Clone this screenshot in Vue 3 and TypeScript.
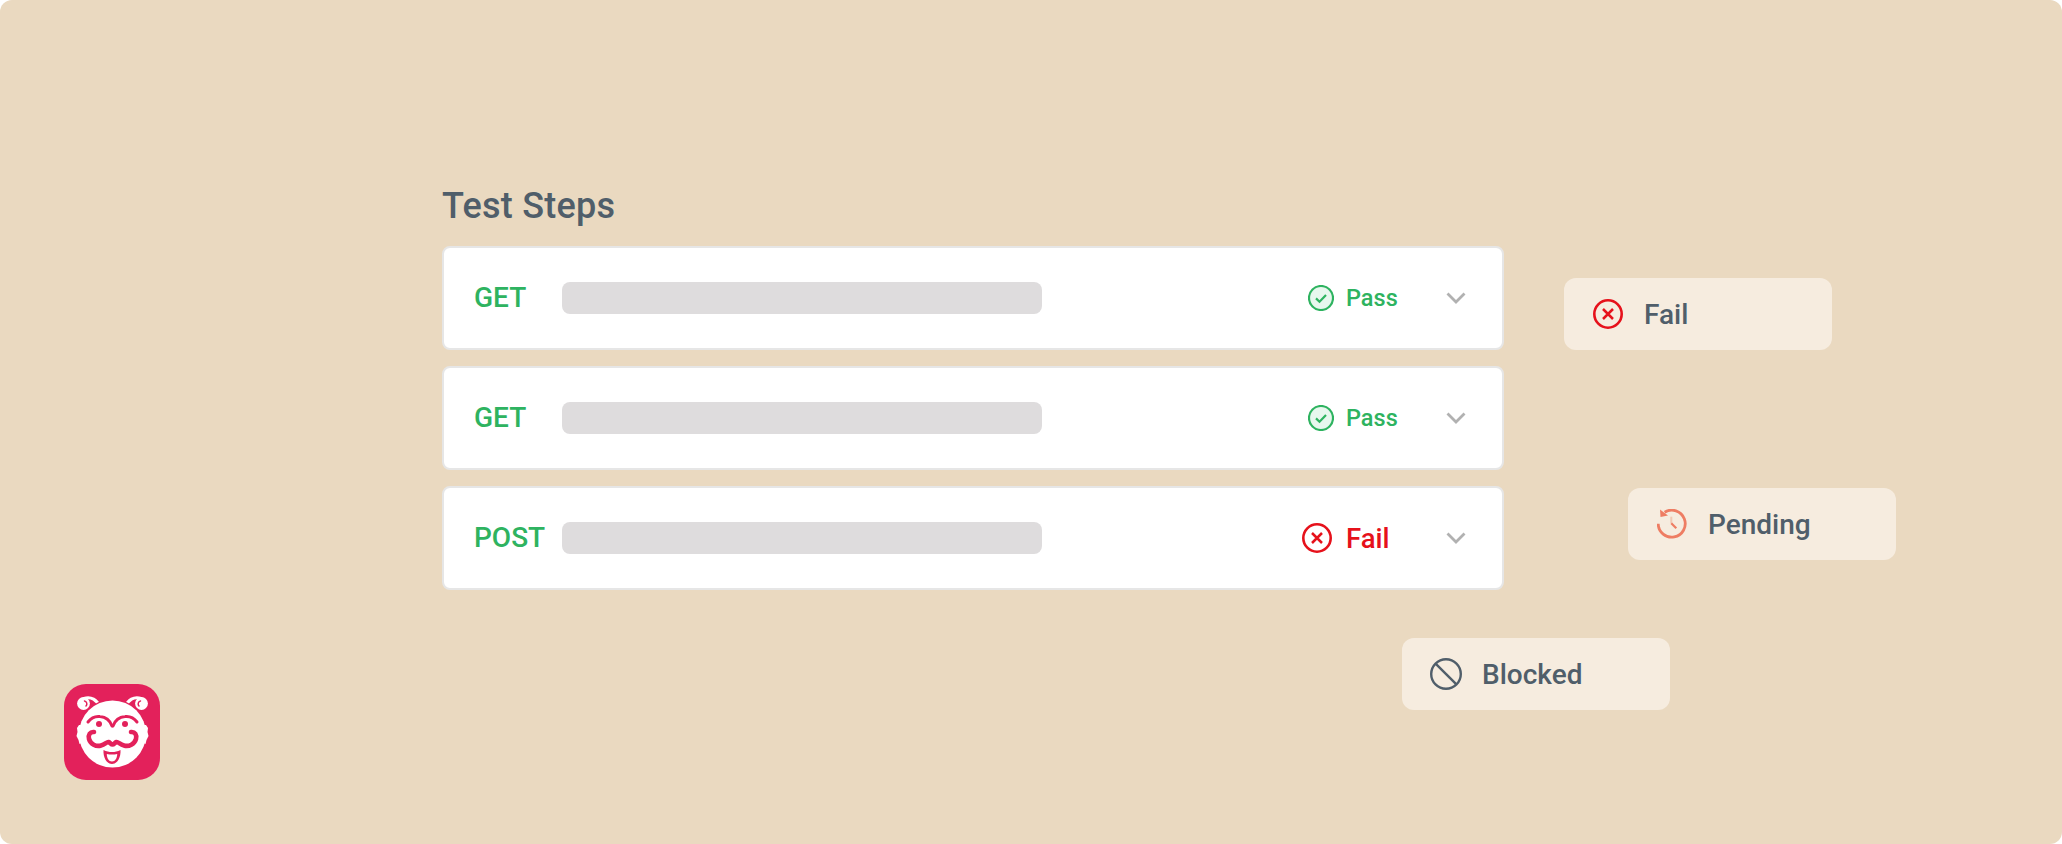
<script setup lang="ts">
interface Step {
  method: string
  status: 'pass' | 'fail'
  label: string
}
const steps: Step[] = [
  { method: 'GET', status: 'pass', label: 'Pass' },
  { method: 'GET', status: 'pass', label: 'Pass' },
  { method: 'POST', status: 'fail', label: 'Fail' },
]
</script>

<template>
  <div class="page">
    <section class="steps">
      <h1 class="title">Test Steps</h1>
      <div class="list">
        <div v-for="(s, i) in steps" :key="i" class="row">
          <span class="method">{{ s.method }}</span>
          <span class="bar"></span>
          <span class="status" :class="s.status">
            <svg v-if="s.status === 'pass'" viewBox="0 0 26 26" width="26" height="26">
              <circle cx="13" cy="13" r="12" fill="#e8f7ee" stroke="#2eb360" stroke-width="2.2" />
              <path d="M8 13.4l3.5 3.3 6.5-6.6" fill="none" stroke="#2eb360" stroke-width="2.2" />
            </svg>
            <svg v-else viewBox="0 0 30 30" width="30" height="30">
              <circle cx="15" cy="15" r="13.7" fill="none" stroke="#e6111b" stroke-width="2.6" />
              <path d="M10 10l10 10M20 10L10 20" fill="none" stroke="#e6111b" stroke-width="2.5" />
            </svg>
            <span class="status-text">{{ s.label }}</span>
          </span>
          <svg class="chev" viewBox="0 0 20 12" width="20" height="12">
            <path d="M1.500 1.500L10 10l8.500-8.500" fill="none" stroke="#b1b1b1" stroke-width="2.800" />
          </svg>
        </div>
      </div>
    </section>

    <div class="tag tag-fail">
      <svg viewBox="0 0 30 30" width="30" height="30">
        <circle cx="15" cy="15" r="13.7" fill="none" stroke="#e6111b" stroke-width="2.6" />
        <path d="M10 10l10 10M20 10L10 20" fill="none" stroke="#e6111b" stroke-width="2.5" />
      </svg>
      <span>Fail</span>
    </div>
    <div class="tag tag-pending">
      <svg viewBox="0 0 30 30" width="30" height="30">
        <path d="M7.600 3.200A13.500 13.500 0 1 1 1.200 14.800" fill="none" stroke="#ee7d63" stroke-width="2.800" />
        <path d="M3 .5l.5 7.500 7.500-1.500z" fill="#ee7d63" />
        <path d="M14.300 7.700v6.600" fill="none" stroke="#f0c9b4" stroke-width="2" />
        <path d="M14.300 14.300l5 5" fill="none" stroke="#ee7d63" stroke-width="2.200" />
      </svg>
      <span>Pending</span>
    </div>
    <div class="tag tag-blocked">
      <svg viewBox="0 0 32 32" width="32" height="32">
        <circle cx="16" cy="16" r="14.800" fill="none" stroke="#505e6a" stroke-width="2.400" />
        <path d="M5.600 5.600l20.800 20.800" fill="none" stroke="#505e6a" stroke-width="2.400" />
      </svg>
      <span>Blocked</span>
    </div>

    <svg class="logo" viewBox="0 0 96 96" width="96" height="96">
      <rect width="96" height="96" rx="22" fill="#e3215b" />
      <circle cx="19.500" cy="19.500" r="6.400" fill="#fff" />
      <circle cx="77.500" cy="19.500" r="6.400" fill="#fff" />
      <path d="M20 14.500C27 12 33 16 36 23M77 14.500C70 12 64 16 61 23" fill="none" stroke="#fff" stroke-width="3.200" stroke-linecap="round" />
      <path d="M20.500 17c2.500.5 3 3.500 1.500 5M76.500 17c-2.500.5-3 3.500-1.500 5" fill="none" stroke="#e3215b" stroke-width="1.500" stroke-linecap="round" />
      <circle cx="48.500" cy="50" r="34.800" fill="#e3215b" />
      <circle cx="48.500" cy="50" r="33.600" fill="#fff" />
      <path d="M15 41l-2 3 .5 4-1 4 2 4 1 4 6-3V41zM82 41l2 3-.5 4 1 4-2 4-1 4-6-3V41z" fill="#fff" />
      <g fill="none" stroke="#e3215b" stroke-linecap="round">
        <path d="M24 38c3-4 8-6 12-5.500 6 .5 10 4 12 9.500" stroke-width="3" />
        <path d="M73 38c-3-4-8-6-12-5.500-6 .5-10 4-12 9.500" stroke-width="3" />
        <path d="M30 48c-4-.5-6 3-5 7 1.500 5 7 8 12 6.500 4-1 6-4 7.500-3.500 1.500.5 2.500 2.500 4 2.500s2.500-2 4-2.500c1.500-.5 3.500 2.500 7.500 3.500 5 1.500 10.500-1.500 12-6.500 1-4-1-7.500-5-7" stroke-width="4.600" />
      </g>
      <circle cx="35" cy="40" r="3" fill="#e3215b" />
      <circle cx="61" cy="40" r="3" fill="#e3215b" />
      <path d="M39.500 66c3 1.500 5.500 2 8.500 2s5.500-.5 8.500-2c.5 7-3 14-8.500 14s-9-7-8.500-14z" fill="#e3215b" />
      <path d="M42.800 70c3.200.8 7.200.8 10.400 0 0 4-2 7.500-5.200 7.500s-5.200-3.500-5.200-7.500z" fill="#fff" />
    </svg>
  </div>
</template>

<style>
html,
body {
  margin: 0;
  background: #fff;
}
</style>

<style scoped>
.page {
  position: relative;
  box-sizing: border-box;
  width: 2062px;
  height: 844px;
  padding: 185px 0 64px 64px;
  background: #ead9c0;
  border-radius: 12px;
  font-family: Roboto, "Liberation Sans", sans-serif;
  display: flex;
  flex-direction: column;
}
.steps {
  margin-left: 378px;
  width: 1062px;
}
.title {
  margin: 0 0 19px;
  font-size: 36px;
  line-height: 42px;
  font-weight: 500;
  letter-spacing: 0.25px;
  color: #505e6a;
}
.list {
  display: flex;
  flex-direction: column;
  gap: 16px;
}
.row {
  box-sizing: border-box;
  height: 104px;
  display: flex;
  align-items: center;
  padding: 0 36px 0 30px;
  background: #fff;
  border: 2px solid #e6e6e6;
  border-radius: 8px;
}
.method {
  width: 88px;
  padding-bottom: 2px;
  font-size: 28px;
  font-weight: 500;
  color: #2eb360;
}
.bar {
  width: 480px;
  height: 32px;
  border-radius: 8px;
  background: #dedcdd;
}
.status {
  margin-left: auto;
  display: flex;
  align-items: center;
}
.status svg {
  flex: none;
}
.status-text {
  width: 100px;
}
.status.pass {
  gap: 12px;
  color: #2eb360;
  font-size: 23.5px;
  font-weight: 500;
}
.status.fail {
  gap: 14px;
  color: #e6111b;
  font-size: 27.5px;
  font-weight: 500;
}
.chev {
  flex: none;
}
.tag {
  position: absolute;
  box-sizing: border-box;
  width: 268px;
  height: 72px;
  display: flex;
  align-items: center;
  gap: 21px;
  padding-left: 29px;
  background: #f6ecdf;
  border-radius: 12px;
  font-size: 28px;
  font-weight: 500;
  color: #505e6a;
}
.tag-fail {
  left: 1564px;
  top: 278px;
}
.tag-pending {
  left: 1628px;
  top: 488px;
}
.tag-blocked {
  left: 1402px;
  top: 638px;
  padding-left: 28px;
  gap: 20px;
}
.logo {
  margin-top: auto;
  flex: none;
}
</style>
